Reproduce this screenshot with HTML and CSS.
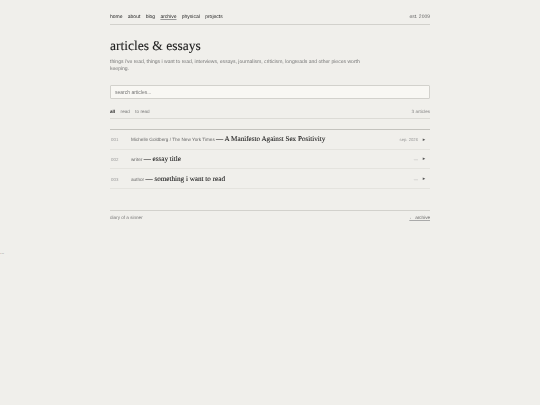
FILE: index.html
```html
<!DOCTYPE html>
<html lang="en">
<head>
    <meta charset="UTF-8">
    <title>articles &amp; essays</title>
    <link rel="stylesheet" href="styles.css">
</head>
<body>
    <div class="container">
        <nav class="topnav">
            <div class="nav-links">
                <a href="#">home</a>
                <a href="#">about</a>
                <a href="#">blog</a>
                <a href="#" class="current">archive</a>
                <a href="#">physical</a>
                <a href="#">projects</a>
            </div>
            <span class="est">est. 2009</span>
        </nav>

        <h1>articles &amp; essays</h1>
        <p class="intro">things i've read, things i want to read, interviews, essays, journalism, criticism, longreads and other pieces worth keeping.</p>

        <input class="search" type="text" placeholder="search articles...">

        <div class="filters">
            <span class="filter active">all</span>
            <span class="filter">read</span>
            <span class="filter">to read</span>
            <span class="count">3 articles</span>
        </div>

        <div class="list">
            <div class="row">
                <span class="num">001</span>
                <span class="entry"><span class="author">Michelle Goldberg / The New York Times</span> <span class="title">— A Manifesto Against Sex Positivity</span></span>
                <span class="date">sep. 2026</span>
                <span class="arrow">▸</span>
            </div>
            <div class="row">
                <span class="num">002</span>
                <span class="entry"><span class="author">writer</span> <span class="title">— essay title</span></span>
                <span class="date">—</span>
                <span class="arrow">▸</span>
            </div>
            <div class="row">
                <span class="num">003</span>
                <span class="entry"><span class="author">author</span> <span class="title">— something i want to read</span></span>
                <span class="date">—</span>
                <span class="arrow">▸</span>
            </div>
        </div>

        <footer class="foot">
            <span>diary of a sinner</span>
            <a href="#">← archive</a>
        </footer>
    </div>
    <div class="stray">...</div>
</body>
</html>
```

FILE: styles.css
```css
* {
    margin: 0;
    padding: 0;
    box-sizing: border-box;
}

body {
    background: #f0efeb;
    font-family: "Liberation Sans", Arial, sans-serif;
    color: #2a2a2a;
    min-height: 100vh;
    text-rendering: geometricPrecision;
}

.container {
    width: 320px;
    margin: 0 auto;
    padding-top: 13.5px;
    filter: blur(0.3px);
}

.topnav {
    display: flex;
    justify-content: space-between;
    align-items: baseline;
    font-size: 5px;
    line-height: 6px;
    padding-bottom: 4.5px;
    border-bottom: 1px solid #d2d1cc;
}

.nav-links {
    display: flex;
    gap: 5.3px;
}

.nav-links a {
    color: #222;
    text-decoration: none;
}

.nav-links a.current {
    text-decoration: underline;
    text-decoration-color: #999;
}

.est {
    color: #666;
}

h1 {
    font-family: "Liberation Serif", Georgia, serif;
    font-weight: 400;
    font-size: 13.5px;
    line-height: 17px;
    margin-top: 12px;
    color: #222;
    -webkit-text-stroke: 0.1px #222;
}

.intro {
    font-size: 5.05px;
    line-height: 7.3px;
    color: #777;
    margin-top: 5px;
    width: 255px;
}

.search {
    display: block;
    width: 100%;
    height: 14px;
    margin-top: 11.5px;
    padding: 0 4px;
    background: #f8f7f3;
    border: 1px solid #d2d1cc;
    border-radius: 1px;
    font-family: inherit;
    font-size: 5px;
    outline: none;
}

.search::placeholder {
    color: #777;
}

.filters {
    display: flex;
    align-items: baseline;
    gap: 5.5px;
    font-size: 4.6px;
    line-height: 6px;
    margin-top: 9.5px;
    padding-bottom: 3px;
    border-bottom: 1px solid #dcdbd6;
    color: #777;
}

.filter.active {
    color: #222;
    font-weight: 700;
}

.count {
    margin-left: auto;
    color: #888;
}

.list {
    margin-top: 10.5px;
    border-top: 1px solid #c4c3be;
}

.row {
    display: flex;
    align-items: center;
    height: 19.6px;
    padding-top: 1px;
    border-bottom: 1px solid #e4e3de;
}

.num {
    width: 21px;
    padding-left: 1px;
    font-size: 4.4px;
    color: #999;
}

.entry {
    flex: 1;
    font-size: 4.6px;
    line-height: 10px;
}

.author {
    font-size: 4.65px;
    color: #666;
}

.title {
    font-family: "Liberation Serif", Georgia, serif;
    font-size: 7.15px;
    color: #222;
    -webkit-text-stroke: 0.1px #222;
}

.date {
    font-size: 4.2px;
    color: #999;
}

.arrow {
    width: 12px;
    text-align: center;
    font-size: 5px;
    color: #555;
}

.foot {
    display: flex;
    justify-content: space-between;
    margin-top: 21px;
    padding-top: 4.5px;
    border-top: 1px solid #d2d1cc;
    font-size: 4.6px;
    line-height: 6px;
    color: #777;
}

.foot a {
    color: #666;
    text-decoration-color: #aaa;
}

.stray {
    margin-top: 29px;
    font-size: 5px;
    line-height: 6px;
    color: #555;
}
```
